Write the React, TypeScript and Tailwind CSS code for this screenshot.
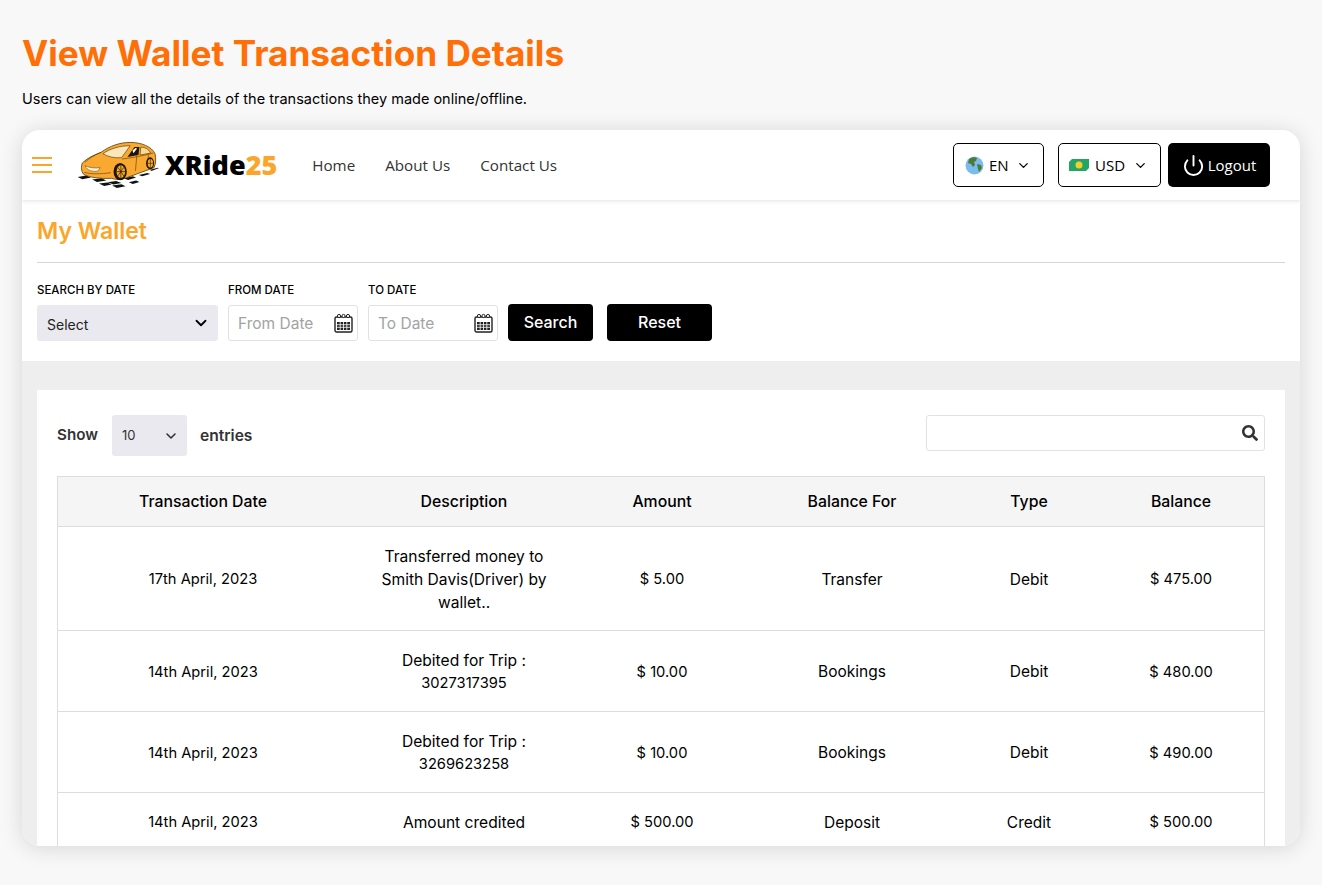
import { ChevronDown, Power } from "lucide-react";
import { FaSearch } from "react-icons/fa";

const rows = [
  { date: "17th April, 2023", desc: ["Transferred money to", "Smith Davis(Driver) by", "wallet.."], amount: "$ 5.00", balanceFor: "Transfer", type: "Debit", balance: "$ 475.00", h: "h-[104px]" },
  { date: "14th April, 2023", desc: ["Debited for Trip :", "3027317395"], amount: "$ 10.00", balanceFor: "Bookings", type: "Debit", balance: "$ 480.00", h: "h-[81px]" },
  { date: "14th April, 2023", desc: ["Debited for Trip :", "3269623258"], amount: "$ 10.00", balanceFor: "Bookings", type: "Debit", balance: "$ 490.00", h: "h-[81px]" },
  { date: "14th April, 2023", desc: ["Amount credited"], amount: "$ 500.00", balanceFor: "Deposit", type: "Credit", balance: "$ 500.00", h: "h-[58px]" },
];

const cols = "grid grid-cols-[290px_232px_164px_216px_138px_1fr] items-center text-center";

function CarLogo() {
  return (
    <svg width="88" height="55" viewBox="20 0 265 165" className="shrink-0 mb-[5px]">
      {/* checker floor */}
      <g fill="#111">
        <path d="M22 126l26-4 14 6-26 5z" />
        <path d="M66 134l28-4 14 7-28 4z" />
        <path d="M112 142l26-4 16 6-24 5z" />
        <path d="M86 146l26-3 12 6-22 4z" />
        <path d="M126 152l28-4 12 6-26 5z" />
        <path d="M160 130l28-6 10 4-24 7z" />
        <path d="M176 142l22-5 10 4-20 6z" />
        <path d="M206 120l26-6 8 3-24 7z" />
        <path d="M240 104l24-6 2 2-22 8z" />
      </g>
      {/* body */}
      <path d="M36 84c14-14 34-24 56-32 28-20 58-30 88-30 35 0 65 13 75 34 3 16 3 29-3 42l-82 30c-20 8-35 6-45 2-30 2-70-2-85-12-8-10-8-23-4-34z" fill="#f9a92f" stroke="#5a3d0c" strokeWidth="2.5" />
      {/* windshield and windows */}
      <path d="M98 56c20-14 48-24 82-24l-14 20-12 16c-22 2-42-3-56-12z" fill="#fce5b6" stroke="#5a3d0c" strokeWidth="2" />
      <path d="M172 66l21-30h15l-3 24z" fill="#1c1508" />
      <path d="M187 46l9-7 5 1-11 15z" fill="#fff" />
      <path d="M212 36c14 0 25 7 30 18l-32 6z" fill="#fcd98f" stroke="#5a3d0c" strokeWidth="2" />
      {/* headlight */}
      <path d="M44 92c12 6 30 9 46 6l-7 10c-14 3-33-1-39-16z" fill="#fff6e2" stroke="#5a3d0c" strokeWidth="1.5" />
      {/* body lines */}
      <path d="M42 112c20 6 48 6 80 1M92 52c-18 8-36 18-48 30M155 72c28-3 60-9 95-18M200 62l-4 46M235 58l-2 36" fill="none" stroke="#5a3d0c" strokeWidth="1.8" />
      {/* wheels */}
      <ellipse cx="150" cy="110" rx="20" ry="26" fill="#1c1508" />
      <ellipse cx="152" cy="110" rx="13" ry="19" fill="#f9a92f" />
      <path d="M152 91v38M139 110h26M143 97l18 26M161 97l-18 26" stroke="#1c1508" strokeWidth="2" />
      <ellipse cx="240" cy="85" rx="12" ry="18" fill="#1c1508" />
      <ellipse cx="241" cy="85" rx="8" ry="13" fill="#f9a92f" />
      <path d="M241 72v26M233 85h16" stroke="#1c1508" strokeWidth="1.6" />
    </svg>
  );
}

function CalendarIcon() {
  return (
    <svg width="19" height="20" viewBox="0 0 19 20" className="shrink-0">
      <rect x="1" y="4" width="17" height="15" rx="1.5" fill="#fff" stroke="#222" strokeWidth="1.4" />
      <rect x="3" y="9" width="13" height="8" fill="#222" />
      <path d="M6.2 9v8M9.5 9v8M12.8 9v8M3 11.7h13M3 14.3h13" stroke="#fff" strokeWidth="0.8" />
      <circle cx="5" cy="3" r="1.6" fill="#fff" stroke="#222" />
      <circle cx="9.5" cy="3" r="1.6" fill="#fff" stroke="#222" />
      <circle cx="14" cy="3" r="1.6" fill="#fff" stroke="#222" />
    </svg>
  );
}

function DateField({ label, placeholder }: { label: string; placeholder: string }) {
  return (
    <div>
      <div className="text-[11.5px] font-medium leading-[16px] text-black uppercase mb-[7px]">{label}</div>
      <div className="w-[130px] h-[36px] border border-[#e2e2e2] rounded-[3px] flex items-center justify-between pl-[9px] pr-[4px] bg-white">
        <span className="text-[15.5px] text-[#a3a3a3] pt-[2px]">{placeholder}</span>
        <CalendarIcon />
      </div>
    </div>
  );
}

export default function App() {
  return (
    <div className="min-h-[885px] bg-[#f8f8f8] px-[22px] pt-[33px] font-['Inter',sans-serif]">
      <h1 className="text-[35.2px] leading-[40px] font-bold text-[#ff6f07]">View Wallet Transaction Details</h1>
      <p className="mt-[16px] text-[14.5px] leading-[20px] text-black">Users can view all the details of the transactions they made online/offline.</p>

      <div className="mt-[21px] h-[716px] w-[1278px] overflow-hidden rounded-[18px] bg-white shadow-[0_2px_22px_rgba(0,0,0,0.14)]">
        {/* Top nav */}
        <div className="h-[70px] flex items-center pl-[10px] pr-[30px] shadow-[0_1px_4px_rgba(0,0,0,0.12)] relative font-['Open_Sans',sans-serif]">
          <div className="w-[20px] flex flex-col gap-[5px]">
            <span className="h-[2px] bg-[#f9a62b]" />
            <span className="h-[2px] bg-[#f9a62b]" />
            <span className="h-[2px] bg-[#f9a62b]" />
          </div>
          <div className="ml-[25px]"><CarLogo /></div>
          <div className="text-[27px] font-extrabold">
            <span className="text-black">XRide</span><span className="text-[#f9a62b]">25</span>
          </div>
          <nav className="ml-[35px] flex gap-[30px] text-[15.2px] text-[#333]">
            <span>Home</span>
            <span>About Us</span>
            <span>Contact Us</span>
          </nav>
          <div className="ml-auto flex items-center">
            <div className="w-[91px] h-[44px] border border-black rounded-[5px] flex items-center pl-[11px] gap-[5px] text-[15px] text-black">
              <svg width="19" height="19" viewBox="0 0 19 19">
                <circle cx="9.5" cy="9.5" r="9" fill="#7cbcec" />
                <path d="M4 3c3-2 6-2 8-1l-1 3-2 1 1 3-2 2-2-3-3-1z" fill="#4b7a3a" />
                <path d="M12 8l4 1 1 3-3 4-1-3z" fill="#4b7a3a" />
              </svg>
              <span>EN</span>
              <ChevronDown className="ml-[2px] w-[15px] h-[15px]" strokeWidth={2} />
            </div>
            <div className="ml-[14px] w-[103px] h-[44px] border border-black rounded-[5px] flex items-center pl-[10px] gap-[6px] text-[15px] text-black">
              <svg width="20" height="12" viewBox="0 0 20 12">
                <path d="M3 0h17v9l-3 3H0V3z" fill="#22a565" />
                <circle cx="10" cy="6" r="3.5" fill="#f4ce2f" />
              </svg>
              <span>USD</span>
              <ChevronDown className="ml-[2px] w-[15px] h-[15px]" strokeWidth={2} />
            </div>
            <div className="ml-[7px] w-[102px] h-[44px] bg-black rounded-[5px] flex items-center justify-center gap-[3px] text-[15px] font-medium text-white">
              <Power className="w-[23px] h-[23px]" strokeWidth={2} />
              <span>Logout</span>
            </div>
          </div>
        </div>

        {/* Wallet filters */}
        <div className="px-[15px] h-[161px]">
          <div className="h-[63px] border-b border-[#d6d6d6] flex items-center">
            <span className="text-[23px] font-semibold text-[#f9a62b]">My Wallet</span>
          </div>
          <div className="mt-[19px] flex items-end">
            <div>
              <div className="text-[11.5px] font-medium leading-[16px] text-black uppercase mb-[7px]">Search by date</div>
              <div className="w-[181px] h-[36px] bg-[#e9e9ef] rounded-[3px] flex items-center justify-between pl-[10px] pr-[8px]">
                <span className="text-[14px] text-[#222] pt-[3px]">Select</span>
                <ChevronDown className="w-[18px] h-[18px] text-black" strokeWidth={2.4} />
              </div>
            </div>
            <div className="ml-[10px]"><DateField label="From date" placeholder="From Date" /></div>
            <div className="ml-[10px]"><DateField label="To date" placeholder="To Date" /></div>
            <button className="ml-[10px] w-[85px] h-[37px] pb-[2px] bg-black rounded-[4px] text-white text-[16px] font-medium">Search</button>
            <button className="ml-[14px] w-[105px] h-[37px] pb-[2px] bg-black rounded-[4px] text-white text-[16px] font-medium">Reset</button>
          </div>
        </div>

        {/* Table area */}
        <div className="bg-[#eeeeee] px-[15px] pt-[29px] h-[485px]">
          <div className="bg-white px-[20px] pt-[25px] h-[456px] overflow-hidden">
            <div className="flex items-start justify-between">
              <div className="flex items-center text-[15.2px] font-semibold text-[#333]">
                <span>Show</span>
                <div className="ml-[14px] w-[75px] h-[41px] bg-[#e9e9ef] rounded-[3px] flex items-center justify-between pl-[10px] pr-[8px]">
                  <span className="text-[13px] font-normal">10</span>
                  <ChevronDown className="w-[16px] h-[16px]" strokeWidth={2.4} />
                </div>
                <span className="ml-[13px] text-[15.6px]">entries</span>
              </div>
              <div className="w-[339px] h-[36px] border border-[#e2e2e2] rounded-[3px] flex items-center justify-end pr-[6px]">
                <FaSearch className="w-[16px] h-[16px] text-[#333]" />
              </div>
            </div>

            <div className="mt-[20px] border border-[#dddddd] border-b-0 text-[14.7px] text-black">
              <div className={`${cols} h-[50px] bg-[#f5f5f5] text-[15.8px] font-medium border-b border-[#dddddd]`}>
                <span>Transaction Date</span>
                <span>Description</span>
                <span>Amount</span>
                <span>Balance For</span>
                <span>Type</span>
                <span>Balance</span>
              </div>
              {rows.map((r, i) => (
                <div key={i} className={`${cols} ${r.h} pt-[2px] border-b border-[#dddddd]`}>
                  <span>{r.date}</span>
                  <div className="leading-[23px] text-[15.6px]">
                    {r.desc.map((line) => (
                      <div key={line} className={/^\d+$/.test(line) ? "text-[14.7px]" : ""}>{line}</div>
                    ))}
                  </div>
                  <span>{r.amount}</span>
                  <span className="text-[15.5px]">{r.balanceFor}</span>
                  <span className="text-[15.5px]">{r.type}</span>
                  <span>{r.balance}</span>
                </div>
              ))}
            </div>
          </div>
        </div>
      </div>
    </div>
  );
}
